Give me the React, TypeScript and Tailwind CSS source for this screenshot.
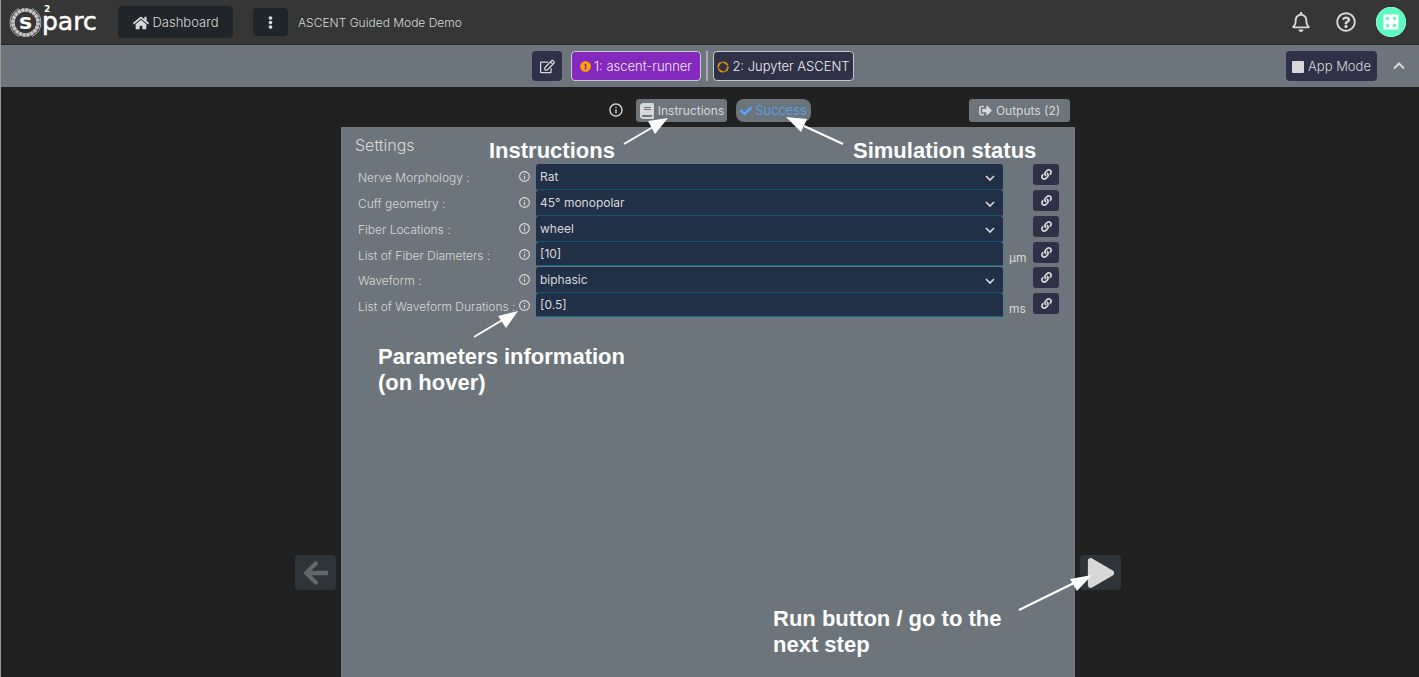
import React from "react";
import {
  FaArrowLeft,
  FaBook,
  FaCheck,
  FaEllipsisV,
  FaExclamationCircle,
  FaHome,
  FaLink,
  FaPlay,
  FaRegBell,
  FaRegEdit,
  FaRegQuestionCircle,
  FaSignOutAlt,
} from "react-icons/fa";
import { MdInfoOutline } from "react-icons/md";

type Setting = {
  id: string;
  label: string;
  kind: "select" | "text";
  value: string;
  unit?: string;
};

const settings: Setting[] = [
  { id: "nerve", label: "Nerve Morphology :", kind: "select", value: "Rat" },
  { id: "cuff", label: "Cuff geometry :", kind: "select", value: "45° monopolar" },
  { id: "fiber", label: "Fiber Locations :", kind: "select", value: "wheel" },
  { id: "diameters", label: "List of Fiber Diameters :", kind: "text", value: "[10]", unit: "μm" },
  { id: "waveform", label: "Waveform :", kind: "select", value: "biphasic" },
  { id: "durations", label: "List of Waveform Durations :", kind: "text", value: "[0.5]", unit: "ms" },
];

function Logo() {
  return (
    <a href="#" aria-label="sparc" className="flex h-9 w-[90px] shrink-0 items-center text-white">
      <svg viewBox="0 0 90 36" className="h-9 w-[90px] overflow-visible" fill="currentColor">
        <circle cx="15.500" cy="18.500" r="12.500" fill="none" stroke="#8e8e8e" strokeWidth="3.500" />
        <circle cx="15.500" cy="18.500" r="12.500" fill="none" stroke="#c8c8c8" strokeWidth="3.500" strokeDasharray="2.600 1.300" />
        <path d="M9 4.500a15.500 15.500 0 0 0 0 28M22 4.500a15.500 15.500 0 0 1 0 28" fill="none" stroke="#b0b0b0" strokeWidth="1" />
        <text x="9" y="25" fontSize="22" fontWeight="700" fontFamily="DejaVu Sans">s</text>
        <text x="32" y="26" fontSize="25" stroke="currentColor" strokeWidth="0.500" fontFamily="DejaVu Sans">parc</text>
        <text x="34" y="8" fontSize="9" fontWeight="700" fontFamily="DejaVu Sans">2</text>
      </svg>
    </a>
  );
}

function Avatar() {
  return (
    <svg viewBox="0 0 30 30" className="h-[30px] w-[30px]">
      <circle cx="15" cy="15" r="15" fill="#fff" />
      <path d="M6.500 2.700A15 15 0 0 1 23.500 2.700L27.300 6.500A15 15 0 0 1 27.300 23.500L23.500 27.300A15 15 0 0 1 6.500 27.300L2.700 23.500A15 15 0 0 1 2.700 6.500Z" fill="#5cfac0" />
      <path d="M7.500 7.500h15v15h-15z" fill="#fff" />
      <g fill="#5cfac0">
        <circle cx="11.500" cy="11.500" r="1.700" />
        <circle cx="18.500" cy="11.500" r="1.700" />
        <circle cx="11.500" cy="18.500" r="1.700" />
        <circle cx="18.500" cy="18.500" r="1.700" />
      </g>
    </svg>
  );
}

function Header() {
  return (
    <header className="flex h-[45px] items-center border-b border-[#292929] bg-[#363636] pr-[13px] pl-[9px]">
      <Logo />
      <button className="ml-[18px] flex h-8 w-[115px] items-center justify-center gap-1 rounded bg-[#202529] pt-px text-[13px] font-light">
        <FaHome className="h-4 w-4" />
        Dashboard
      </button>
      <button aria-label="More" className="ml-5 flex h-7 w-[35px] items-center justify-center rounded bg-[#202529]">
        <FaEllipsisV className="h-[13px] w-[13px]" />
      </button>
      <h1 className="ml-[10px] pt-px text-xs font-light">ASCENT Guided Mode Demo</h1>
      <div className="ml-auto flex items-center gap-[25px]">
        <button aria-label="Notifications">
          <FaRegBell className="h-5 w-5" />
        </button>
        <button aria-label="Help">
          <FaRegQuestionCircle className="h-5 w-5" />
        </button>
        <button aria-label="Account" className="-ml-[5px] rounded-full">
          <Avatar />
        </button>
      </div>
    </header>
  );
}

function StepBar() {
  return (
    <nav className="flex h-[42px] items-center bg-[#6b757b] text-[13px] font-light">
      <div className="grid flex-1 grid-cols-[1fr_auto_1fr] items-center">
        <span />
        <div className="flex items-center">
          <button aria-label="Edit" className="mr-[9px] flex h-[30px] w-[30px] items-center justify-center rounded bg-[#2f3146]">
            <FaRegEdit className="h-[15px] w-[15px]" />
          </button>
          <button className="flex h-[30px] w-[130px] items-center justify-center gap-[3px] rounded border border-[#c8c8cc] bg-[#8428be] pt-px text-[#eeeeee]">
            <FaExclamationCircle className="h-[11px] w-[11px] text-[#ffa500]" />
            1: ascent-runner
          </button>
          <span className="mx-[5px] h-[30px] w-[2px] bg-[#a8adb1]" />
          <button className="flex h-[30px] w-[141px] items-center justify-center gap-[3px] rounded border border-[#c8c8cc] bg-[#2f3146] pt-px text-[#eeeeee]">
            <svg viewBox="0 0 12 12" className="h-3 w-3" fill="none">
              <circle cx="6" cy="6" r="4.800" stroke="#a8701a" strokeWidth="1.600" />
              <circle cx="6" cy="6" r="4.800" stroke="#dd920b" strokeWidth="1.600" strokeDasharray="4.500 3.040" />
            </svg>
            2: Jupyter ASCENT
          </button>
        </div>
        <button className="mr-2 flex h-[30px] w-[91px] items-center justify-center gap-1 justify-self-end rounded bg-[#2f3146] pt-px">
          <span className="h-3 w-3 rounded-[1px] bg-[#d8d8d8]" />
          App Mode
        </button>
      </div>
      <button aria-label="Collapse" className="flex w-[34px] justify-start pl-2">
        <svg viewBox="0 0 12 12" className="h-3 w-3" fill="none" stroke="currentColor" strokeWidth="2">
          <path d="M1 8.500L6 3.500L11 8.500" />
        </svg>
      </button>
    </nav>
  );
}

function SettingRow({ item }: { item: Setting }) {
  return (
    <div className="flex items-start">
      <label htmlFor={item.id} className="w-40 pt-[5px] text-xs leading-[18px] font-light whitespace-nowrap">
        {item.label}
      </label>
      <MdInfoOutline className="mt-[6px] h-[13px] w-[13px] shrink-0" />
      <div className="relative ml-[5px] flex-1">
        {item.kind === "select" ? (
          <>
            <select
              id={item.id}
              defaultValue={item.value}
              className="block h-[26px] w-full appearance-none rounded-t-[3px] border-b border-[#0f5575] bg-[#213047] px-1 text-xs outline-none"
            >
              <option>{item.value}</option>
            </select>
            <svg viewBox="0 0 10 10" className="pointer-events-none absolute top-[9px] right-2 h-[10px] w-[10px]" fill="none" stroke="currentColor" strokeWidth="1.700">
              <path d="M1 3L5 7L9 3" />
            </svg>
          </>
        ) : (
          <input
            id={item.id}
            type="text"
            defaultValue={item.value}
            className="mb-px block h-6 w-full rounded-t-[3px] border-b border-[#0f6a8c] bg-[#213047] px-1 text-xs outline-none"
          />
        )}
      </div>
      <span className="h-[25px] w-[30px] pt-[7px] pl-[6px] text-xs leading-[18px]">{item.unit}</span>
      <button aria-label={"Link " + item.label} className="flex h-[21px] w-[26px] items-center justify-center rounded-[3px] bg-[#2f3146]">
        <FaLink className="h-[11px] w-[11px]" />
      </button>
    </div>
  );
}

function Annotations() {
  return (
    <div className="pointer-events-none absolute inset-0 text-[22px] leading-[26px] font-bold text-white [font-family:'Liberation_Sans',sans-serif]">
      <svg className="absolute top-0 left-0 h-[590px] w-full overflow-visible" fill="#fff" stroke="none">
        <g stroke="#fff" strokeWidth="2">
          <path d="M283 57L312 40" />
          <path d="M502 57L463 39" />
          <path d="M133 250L163 232" />
          <path d="M678 523L733 496" />
        </g>
        <path d="M327 31L307 34L314 47Z" />
        <path d="M445 30L466 32L460 45Z" />
        <path d="M177 224L157 229L165 241Z" />
        <path d="M751 488L729 492L736 504Z" />
      </svg>
      <p className="absolute top-[51px] left-[148px]">Instructions</p>
      <p className="absolute top-[51px] left-[512px] whitespace-nowrap">Simulation status</p>
      <p className="absolute top-[257px] left-[37px]">
        Parameters information
        <br />
        (on hover)
      </p>
      <p className="absolute top-[519px] left-[432px]">
        Run button / go to the
        <br />
        next step
      </p>
    </div>
  );
}

export default function App() {
  return (
    <div className="flex min-h-screen flex-col border-l border-[#9a9a9a] bg-[#212121] text-[#d8d8d8] [font-family:Inter,sans-serif]">
      <Header />
      <StepBar />
      <main className="flex flex-1 justify-center pr-1">
        <button aria-label="Previous step" className="mt-[468px] mr-[5px] flex h-[35px] w-[41px] shrink-0 items-center justify-center rounded bg-[#2e3438] text-[#62676a]">
          <FaArrowLeft className="h-7 w-7" />
        </button>
        <div className="relative flex w-full max-w-[734px] flex-col">
          <div className="grid h-10 grid-cols-[1fr_auto_1fr] items-center pt-[6px] pr-[5px] pl-2 text-[13px]">
            <span />
            <div className="flex items-center">
              <MdInfoOutline className="mr-3 h-4 w-4" />
              <button className="flex h-[23px] w-[91px] items-center justify-center gap-[3px] rounded-[3px] bg-[#6b757b] pt-px text-xs">
                <FaBook className="h-4 w-4" />
                Instructions
              </button>
              <span className="ml-[9px] flex h-[23px] w-[75px] items-center justify-center gap-[3px] rounded-lg bg-[#6b757b] pt-px font-light text-[#58a6ff]">
                <FaCheck className="h-3 w-3" />
                Success
              </span>
            </div>
            <button className="flex h-[23px] w-[101px] items-center justify-center gap-1 justify-self-end rounded-[3px] bg-[#6b757b] pt-px text-xs">
              <FaSignOutAlt className="h-[13px] w-[13px]" />
              Outputs (2)
            </button>
          </div>
          <section className="flex-1 bg-[#6b757b] pt-[6px] pr-4 pl-[17px]">
            <h2 className="-ml-[3px] h-[31px] text-base font-light">Settings</h2>
            {settings.map((item) => (
              <SettingRow key={item.id} item={item} />
            ))}
          </section>
          <Annotations />
        </div>
        <button aria-label="Run" className="mt-[468px] ml-[5px] flex h-[35px] w-[41px] shrink-0 items-center justify-center rounded bg-[#2e3438]">
          <FaPlay className="h-[30px] w-[30px]" />
        </button>
      </main>
    </div>
  );
}
